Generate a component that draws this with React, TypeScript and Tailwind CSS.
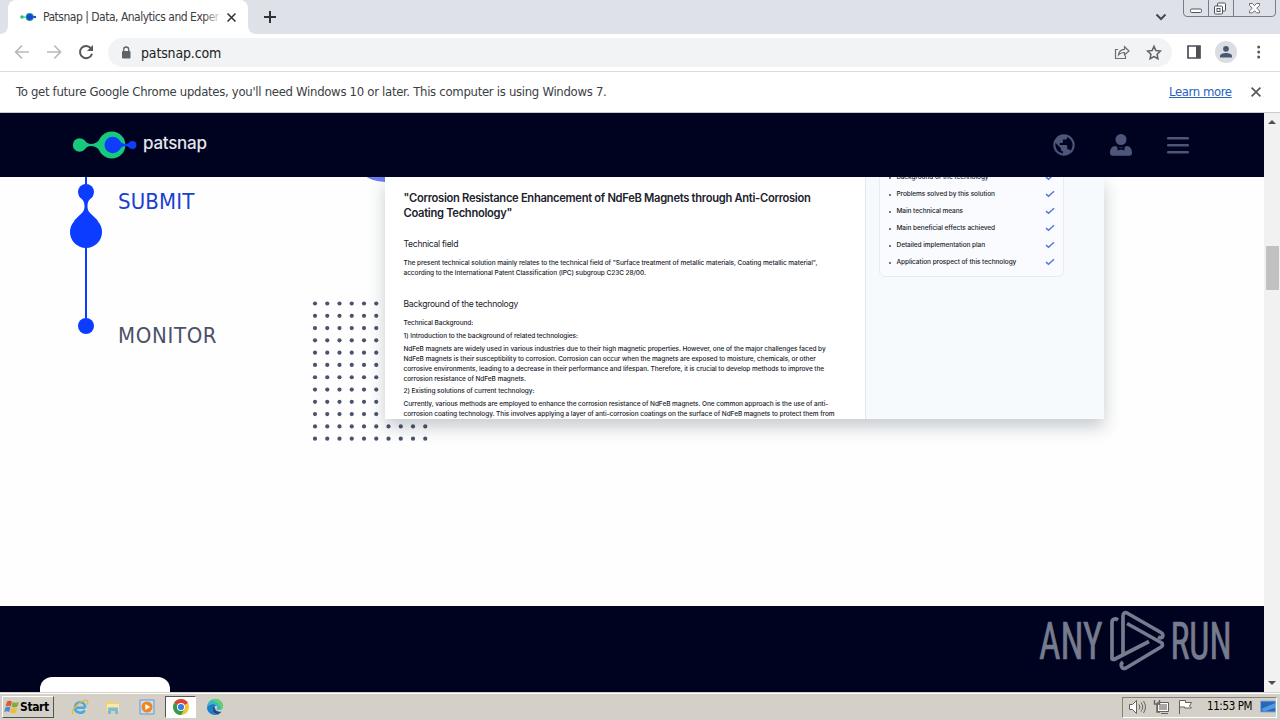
import { ReactNode } from "react";
import clsx from "clsx";

const outline = [
  "Background of the technology",
  "Problems solved by this solution",
  "Main technical means",
  "Main beneficial effects achieved",
  "Detailed implementation plan",
  "Application prospect of this technology",
];

const UI_FONT = "font-['DejaVu_Sans_Condensed','DejaVu_Sans',sans-serif] [font-stretch:condensed]";

function Line({ children, className }: { children: ReactNode; className?: string }) {
  return <div className={clsx("whitespace-nowrap", className)}>{children}</div>;
}

function CloseIcon({ className }: { className?: string }) {
  return (
    <svg viewBox="0 0 10 10" className={className} fill="none" stroke="currentColor" strokeWidth="1.700">
      <path d="M.6.6l8.800 8.800M9.400.6L.6 9.400" />
    </svg>
  );
}

function TabStrip() {
  return (
    <div className="flex h-[34px] shrink-0 bg-[#dee1e8]">
      <div className="w-2 bg-white">
        <div className="h-full rounded-br-lg bg-[#dee1e8]" />
      </div>
      <div className="flex w-[240px] items-center rounded-t-lg bg-white pl-3">
        <svg width="16" height="12" viewBox="0 0 16 12">
          <path d="M2 6h8" stroke="#1fc27a" strokeWidth="1" />
          <circle cx="2" cy="6" r="1.8" fill="#1fc27a" />
          <circle cx="9.7" cy="6" r="4" fill="#19a08c" />
          <circle cx="9.7" cy="6" r="3" fill="#1548d8" />
          <path d="M9 6h6" stroke="#1548d8" strokeWidth="1.4" />
          <circle cx="15" cy="6" r="1.2" fill="#1548d8" />
        </svg>
        <div className="relative ml-[7px] w-[177px] text-[12px] tracking-[-0.5px] text-[#3c4043]">
          <Line>Patsnap | Data, Analytics and Exper</Line>
          <div className="absolute inset-y-0 right-0 w-4 bg-linear-to-r from-white/0 to-white/90" />
        </div>
        <CloseIcon className="ml-[7px] size-[9px] text-[#303236]" />
      </div>
      <div className="w-2 bg-white">
        <div className="h-full rounded-bl-lg bg-[#dee1e8]" />
      </div>
      <svg width="12" height="12" viewBox="0 0 12 12" className="mt-[11px] ml-[8px] text-[#303236]">
        <path d="M6 0v12M0 6h12" stroke="currentColor" strokeWidth="2" />
      </svg>
      <div className="flex-1" />
      <svg width="12" height="8" viewBox="0 0 12 8" className="mt-[13px] mr-[16px]">
        <path d="M1.5 1.5L6 6l4.500-4.500" fill="none" stroke="#45484e" strokeWidth="2" />
      </svg>
      <svg width="93" height="18" viewBox="0 0 93 18" className="mr-[4px]" fill="none" stroke="#777c86">
        <path d="M.5 0v13q0 3.500 3.500 3.500h85q3.500 0 3.500-3.500V0M25.500 0v16.500M50.500 0v16.500" />
        <rect x="7.500" y="9" width="11" height="3.500" rx="1.200" fill="#fff" stroke="#50545e" />
        <rect x="34.500" y="3" width="8" height="8" rx="1" fill="#fff" stroke="#50545e" />
        <rect x="31.500" y="6" width="8" height="8" rx="1" fill="#fff" stroke="#50545e" />
        <rect x="34" y="8.500" width="3" height="3" stroke="#50545e" />
        <path
          d="M66.500 3.500h3l2 2.200 2-2.200h3v2l-2.800 2.700 2.800 2.700v2h-3l-2-2.200-2 2.200h-3v-2l2.800-2.700-2.800-2.700z"
          fill="#fff"
          stroke="#686c76"
        />
      </svg>
    </div>
  );
}

function Toolbar() {
  return (
    <div className="flex h-[38px] shrink-0 items-center border-b border-[#d9dce0] bg-white pl-[14px]">
      <svg width="82" height="18" viewBox="0 0 82 18" fill="none" strokeWidth="1.700" className="mb-[2px]">
        <path d="M15 9H2M8 2.500L1.700 9 8 15.500" stroke="#b7b9bc" />
        <path d="M33 9h13M40.300 2.500L46.600 9 40.300 15.500" stroke="#b7b9bc" />
        <path d="M77.200 5.700A6.100 6.100 0 1 0 78 10.700" stroke="#55585c" strokeWidth="2" />
        <path d="M79 2v6h-6z" fill="#55585c" />
      </svg>
      <div className="ml-[12px] flex h-[29px] w-[1064px] items-center rounded-full bg-[#f1f3f4] pl-[13px]">
        <svg width="10" height="13" viewBox="0 0 10 13" className="mb-px">
          <rect x="1" y="5" width="8.500" height="7.500" rx="1" fill="#5f6368" />
          <path d="M2.700 5V3.500a2.500 2.500 0 0 1 5 0V5" fill="none" stroke="#5f6368" strokeWidth="1.300" />
        </svg>
        <span className="ml-[10px] flex-1 pt-px text-[14px] tracking-[-0.15px] text-[#202124]">patsnap.com</span>
        <svg width="17" height="16" viewBox="0 0 17 16" className="mb-[2px]" fill="none" stroke="#6b6e72" strokeWidth="1.200">
          <path d="M4 5.500H1.500v9h10v-3M4.500 11c.3-3.500 2.300-5.500 6-5.700V2.700L15 7l-4.500 4V8.500c-3 0-4.700.8-6 2.500z" />
        </svg>
        <svg width="18" height="17" viewBox="0 0 18 17" className="mr-[9px] mb-px ml-[14px]">
          <path
            d="M9 2.400l1.900 4.100 4.500.6-3.300 3.100.8 4.500L9 12.500l-3.900 2.200.8-4.500-3.300-3.100 4.500-.6z"
            fill="none"
            stroke="#5f6368"
            strokeWidth="1.500"
          />
        </svg>
      </div>
      <svg width="14" height="14" viewBox="0 0 14 14" className="mb-[2px] ml-[15px]">
        <path d="M1 1h12v12H1z" fill="none" stroke="#4c4f54" strokeWidth="1.700" />
        <path d="M9 1h4v12H9z" fill="#4c4f54" />
      </svg>
      <svg width="22" height="22" viewBox="0 0 22 22" className="mb-px ml-[14px]">
        <circle cx="11" cy="11" r="11" fill="#dadde2" />
        <circle cx="11" cy="7.800" r="2.900" fill="#4b5672" />
        <path d="M5 16.500v-1c0-2.600 3-3.500 6-3.500s6 .9 6 3.500v1z" fill="#4b5672" />
      </svg>
      <svg width="4" height="14" viewBox="0 0 4 14" className="mb-px ml-[20px]" fill="#55585c">
        <circle cx="1.700" cy="2" r="1.500" />
        <circle cx="1.700" cy="7" r="1.500" />
        <circle cx="1.700" cy="12" r="1.500" />
      </svg>
    </div>
  );
}

function InfoBar() {
  return (
    <div className="flex h-[41px] shrink-0 items-center border-b border-[#c9ccd1] bg-white pl-4 text-[13px] text-[#3c4043]">
      <Line className="flex-1 tracking-[-0.3px]">
        To get future Google Chrome updates, you'll need Windows 10 or later. This computer is using Windows 7.
      </Line>
      <a className="w-[63px] whitespace-nowrap tracking-[-0.4px] text-[#2b62bd] underline">Learn more</a>
      <CloseIcon className="mr-[19px] ml-[19px] size-[10px] text-[#55585c]" />
    </div>
  );
}

function SiteNav() {
  return (
    <div className="relative z-20 flex h-16 items-center bg-[#000320] pl-[72px]">
      <svg width="66" height="30" viewBox="0 0 66 30">
        <g fill="#16c97c">
          <circle cx="7.500" cy="15" r="6.700" />
          <circle cx="39.800" cy="15" r="13.600" />
          <path d="M10 8.800c4 2 4 5 9 5.100 6 0 8-4 11.500-8.500v19.200C27 20 25 16.100 19 16.100c-5 .1-5 3.100-9 5.100z" />
        </g>
        <g fill="#0f3dff">
          <circle cx="40.700" cy="15" r="8.200" />
          <circle cx="60.500" cy="15" r="3.900" />
          <path d="M44 7.800c4 2 5 6 9.500 6.200 2.500 0 3.500-1.500 6-2.800v7.600c-2.500-1.300-3.500-2.800-6-2.800-4.500.2-5.500 4.200-9.500 6.200z" />
        </g>
      </svg>
      <span className="ml-[5px] pb-[4px] font-['Inter',sans-serif] text-[17px] leading-[24px] font-medium tracking-[-0.25px] text-[#e4e6ec]">
        patsnap
      </span>
      <div className="flex-1" />
      <svg width="24" height="24" viewBox="0 0 24 24" fill="#4d5678">
        <path d="M12 1.300a10.700 10.700 0 1 0 0 21.400 10.700 10.700 0 0 0 0-21.400zm-1.100 19.200A8.600 8.600 0 0 1 3.600 10l5.200 5.100v1.100c0 1.200 1 2.100 2.100 2.100zm7.400-2.700c-.3-.9-1.100-1.500-2-1.500h-1.100v-3.200c0-.6-.5-1.100-1.100-1.100H7.700V9.900h2.100c.6 0 1.100-.5 1.100-1.100V6.600h2.200c1.200 0 2.100-1 2.100-2.100v-.4a8.600 8.600 0 0 1 3.100 13.700z" />
      </svg>
      <svg width="24" height="24" viewBox="0 0 24 24" className="ml-[33px]" fill="#4d5678">
        <circle cx="12" cy="6.500" r="5.500" />
        <path d="M1 20c0-4.500 2-6.800 5.500-7 1.500 1 3 1.500 5.500 1.500s4-.5 5.500-1.500c3.500.2 5.500 2.500 5.500 7 0 2-1 2.700-2.700 2.700H3.700C2 22.700 1 22 1 20z" />
        <path d="M8.300 13.800L12 15.200l3.700-1.400-.3 3.800-3.400-1.200-3.400 1.200z" fill="#000320" />
      </svg>
      <svg width="22" height="18" viewBox="0 0 22 18" className="mr-[75px] ml-[34px]" fill="#4d5678">
        <rect y="1" width="22" height="2.500" rx="1" />
        <rect y="8" width="22" height="2.500" rx="1" />
        <rect y="15" width="22" height="2.500" rx="1" />
      </svg>
    </div>
  );
}

function Timeline() {
  return (
    <div className="flex w-[312px] shrink-0 pl-[69px]">
      <svg width="34" height="160" viewBox="0 0 34 160" fill="#0b3cff" className="shrink-0">
        <rect x="16" y="0" width="2" height="150" />
        <circle cx="17" cy="15" r="8" />
        <path d="M10 19c4 4 5.500 5 5.500 11 0 6-6 8-10.500 14h24c-4.500-6-10.500-8-10.500-14 0-6 1.500-7 5.500-11z" />
        <circle cx="17" cy="55" r="16" />
        <circle cx="17" cy="149" r="8" />
      </svg>
      <div className="ml-[15px] text-[22px] leading-[26px]">
        <Line className="mt-[12px] tracking-[0.15px] text-[#1a40cf]">SUBMIT</Line>
        <Line className="mt-[108px] tracking-[0.65px] text-[#4b5168]">MONITOR</Line>
      </div>
    </div>
  );
}

function Backdrop() {
  const dots = Array.from({ length: 120 }, (_, i) => ({
    x: 3 + (i % 10) * 12.25,
    y: 126.500 + Math.floor(i / 10) * 12.29,
  }));
  return (
    <svg width="120" height="270" viewBox="0 0 120 270" className="absolute top-0 left-0">
      <circle cx="73" cy="-31" r="36" fill="#6c7fee" />
      {dots.map((d) => (
        <circle key={`${d.x}-${d.y}`} cx={d.x} cy={d.y} r="2.100" fill="#4c526c" />
      ))}
    </svg>
  );
}

function PatentDoc() {
  return (
    <div className="relative flex h-[242px] w-[719px] bg-white font-['Inter',sans-serif] text-[#20222c] shadow-[0_8px_16px_rgba(20,40,60,0.24)]">
      <div className="w-[480px] pl-[18.500px] text-[6.500px] leading-[10px] font-medium tracking-[-0.06px]">
        <div className="mt-[14px] text-[11.200px] leading-[15px] font-semibold tracking-[-0.31px]">
          <Line>"Corrosion Resistance Enhancement of NdFeB Magnets through Anti-Corrosion</Line>
          <Line>Coating Technology"</Line>
        </div>
        <Line className="mt-[17px] text-[8.600px] leading-[12px] font-normal tracking-[-0.29px]">Technical field</Line>
        <div className="mt-[8px]">
          <Line>The present technical solution mainly relates to the technical field of "Surface treatment of metallic materials, Coating metallic material",</Line>
          <Line>according to the International Patent Classification (IPC) subgroup C23C 28/00.</Line>
        </div>
        <Line className="mt-[20px] text-[8.600px] leading-[12px] font-normal tracking-[-0.29px]">
          Background of the technology
        </Line>
        <Line className="mt-[8px]">Technical Background:</Line>
        <Line className="mt-[2.500px]">1) Introduction to the background of related technologies:</Line>
        <div className="mt-[3px]">
          <Line>NdFeB magnets are widely used in various industries due to their high magnetic properties. However, one of the major challenges faced by</Line>
          <Line>NdFeB magnets is their susceptibility to corrosion. Corrosion can occur when the magnets are exposed to moisture, chemicals, or other</Line>
          <Line>corrosive environments, leading to a decrease in their performance and lifespan. Therefore, it is crucial to develop methods to improve the</Line>
          <Line>corrosion resistance of NdFeB magnets.</Line>
        </div>
        <Line className="mt-[2.500px]">2) Existing solutions of current technology:</Line>
        <div className="mt-[2.500px]">
          <Line>Currently, various methods are employed to enhance the corrosion resistance of NdFeB magnets. One common approach is the use of anti-</Line>
          <Line>corrosion coating technology. This involves applying a layer of anti-corrosion coatings on the surface of NdFeB magnets to protect them from</Line>
        </div>
      </div>
      <div className="flex-1 border-l border-[#e3e7ed] bg-[#f6fafd]">
        <div className="mt-[-9px] ml-[13px] h-[109px] w-[185px] rounded-b-md border border-[#e7ecf1] bg-[#f9fbfe]">
          {outline.map((item) => (
            <div key={item} className="flex h-[17px] items-center pr-[8px] pl-[8.500px] text-[6.500px] font-medium tracking-[-0.06px]">
              <span className="size-[2px] rounded-full bg-[#4a4d57]" />
              <Line className="ml-[6px] flex-1">{item}</Line>
              <svg width="10" height="8" viewBox="0 0 10 8" className="mb-px">
                <path d="M1 4.200l2.500 2L9 1.300" fill="none" stroke="#5a78d8" strokeWidth="1.500" />
              </svg>
            </div>
          ))}
        </div>
      </div>
    </div>
  );
}

function Watermark() {
  return (
    <div className="flex h-[64px] items-center font-['Roboto',sans-serif] text-[#767b8e]">
      <svg width="192" height="64" viewBox="0 0 192 64" fill="none" stroke="currentColor" strokeWidth="3.700">
        <g fill="currentColor" strokeWidth="0.700" fontSize="52" fontWeight="400" transform="scale(0.6 1)">
          <text x="0" y="50" textLength="106" lengthAdjust="spacingAndGlyphs">
            ANY
          </text>
          <text x="219" y="50" textLength="102" lengthAdjust="spacingAndGlyphs">
            RUN
          </text>
        </g>
        <path
          d="M84 46V7c0-3 2-4 4-3l34 19.500c2 1.200 2.300 2.500 1.500 4.500-1 1.200-2.500 1-4.500 0"
          strokeLinejoin="round"
        />
        <path d="M79 11c-3-2-6-1-6 2.500V50q1 1 3 0l34-17.500" strokeLinejoin="round" />
        <path d="M84 53c-3 2-2 8 3 6l35-21c2-1.300 2-3.500 0-4.500L88 14.500" strokeLinejoin="round" />
      </svg>
    </div>
  );
}

function Scrollbar() {
  return (
    <div className="flex w-4 flex-col items-center bg-[#f1f1f1]">
      <svg width="8" height="4" viewBox="0 0 8 4" className="mt-[7px]">
        <path d="M0 4l4-4 4 4z" fill="#4f4f4f" />
      </svg>
      <div className="mt-[122px] h-[44px] w-[13px] bg-[#c1c1c1]" />
      <div className="flex-1" />
      <svg width="8" height="4" viewBox="0 0 8 4" className="mb-[7px]">
        <path d="M0 0l4 4 4-4z" fill="#4f4f4f" />
      </svg>
    </div>
  );
}

function Taskbar() {
  return (
    <div className="flex h-7 shrink-0 items-center border-t border-[#d4d0c8] bg-[#d4d0c8] pr-[3px] pl-[2px] shadow-[inset_0_1px_0_#fff]">
      <div className="mt-px flex h-[22px] w-[52px] items-center border border-t-white border-r-[#55534f] border-b-[#55534f] border-l-white pl-[1px]">
        <svg width="16" height="16" viewBox="0 0 16 16">
          <path d="M3 2.500c2-1.200 3.500-1 5 0L6.700 7.400C5 6.500 3.500 6.600 1.600 7.500z" fill="#e2572b" />
          <path d="M8.800 3c2 1 3.800 1 6-.2L13.500 7.500c-2 1.200-4 1.200-6 .2z" fill="#7fae3b" />
          <path d="M1.400 8.400c2-1 3.500-.9 5 0L5.200 13C3.700 12 2 12.100.2 13z" fill="#4a8bd0" />
          <path d="M7.300 8.800c2 1 3.900 1 6-.1L12 13.400c-2 1.100-4 1.100-6 .1z" fill="#efbd35" />
        </svg>
        <span className="text-[12px] font-bold tracking-[-0.4px] text-black">Start</span>
      </div>
      <div className="mt-px ml-[17px] flex items-center">
        <svg width="18" height="18" viewBox="0 0 18 18" fill="none">
          <path d="M14 9.700H5.500M14.200 9.700C14.200 2.500 4 2.500 4 9.700c0 5.500 7.500 6.500 9.700 2.600" stroke="#48a8df" strokeWidth="2.600" />
          <path d="M2 16c-3-3 8-15 14-13.500 1.300.5.800 2.500 0 4" stroke="#e8b935" strokeWidth="1.300" />
        </svg>
        <svg width="18" height="18" viewBox="0 0 18 18" className="ml-[15px]">
          <path d="M2 3h5l1 1.500h7V14H2z" fill="#eed078" />
          <path d="M3 6h12v7H3z" fill="#fae9a8" />
          <path d="M4 16V9.500h10V16h-3v-3H7v3z" fill="#7fbbd7" />
        </svg>
        <svg width="16" height="16" viewBox="0 0 16 16" className="ml-[17px]">
          <path d="M1 1h14v14H1z" fill="#c8def2" stroke="#6599cd" />
          <circle cx="8" cy="8" r="5.500" fill="#ef8520" />
          <path d="M6.300 5l5 3-5 3z" fill="#fff" />
        </svg>
        <div className="ml-[10px] flex h-[22px] w-[31px] items-center justify-center border border-t-[#55534f] border-r-white border-b-white border-l-[#55534f] bg-white">
          <svg width="16" height="16" viewBox="0 0 16 16">
            <circle cx="8" cy="8" r="8" fill="#f4c430" />
            <path d="M8 8L1.100 4A8 8 0 0 1 14.900 4z" fill="#dc4437" />
            <path d="M8 8L1.100 4A8 8 0 0 0 8 16l3.500-6z" fill="#329b50" />
            <circle cx="8" cy="8" r="4" fill="#fff" />
            <circle cx="8" cy="8" r="3.100" fill="#397fe2" />
          </svg>
        </div>
        <svg width="16" height="16" viewBox="0 0 16 16" className="ml-[11px]">
          <path d="M0 8.500C0 3 4 0 8 0c5 0 8 3.500 8 7 0 3-2 4-4 4-1.500 0-2.500-.5-2.500-1 .4-.5.700-1 .7-1.800C10 6 8 5 6 5 3 5 1 6.500 0 8.500z" fill="#38b9c0" />
          <path d="M8 0c5 0 8 3.500 8 7 0 2-1 3.300-2.500 3.800C14 6 10 2.500 4 1.200A8 8 0 0 1 8 0z" fill="#63d06a" />
          <path d="M0 8.500C1 6.500 3 5 6 5c2 0 3.500 1 4 2.300C7 6.500 5 8.500 5.500 11c.5 3 3 4.800 5.500 4.400-1 .4-2 .6-3 .6-5 0-8-4-8-7.500z" fill="#1b7cc8" />
          <path d="M5.500 11c-.4-2 .5-3.500 2-4 0 4 3 6.500 7 5.500-1 1.500-2.200 2.500-3.500 2.900C8 15.500 6 14 5.500 11z" fill="#174f91" />
        </svg>
      </div>
      <div className="flex-1" />
      <div className="mt-px flex h-[21px] items-center border border-t-[#85827c] border-r-white border-b-white border-l-[#85827c] pl-[6px]">
        <svg width="66" height="16" viewBox="0 0 66 16" fill="#fff" stroke="#65625e">
          <path d="M.5 5.500h3l4-4v13l-4-4h-3z" />
          <path d="M10 5.500q2 2.500 0 5M12 3.500q3.500 4.500 0 9M14.500 2q4 6 0 12" fill="none" />
          <path d="M28.500 3.500h11v9h-11zM32 14.500h7" />
          <path d="M30 5h8v6h-8z" fill="#a7a6a3" stroke="none" />
          <path d="M25.500 1v4h5V1M28 5v8h3" fill="none" strokeWidth="1.400" />
          <path d="M50.500 15V1.500h6v2h6l-2 3.500 2 2h-7V8h-5" />
        </svg>
        <span className="ml-[12px] w-[46px] whitespace-nowrap text-[11.500px] tracking-[-0.4px] text-black">11:53 PM</span>
        <svg width="16" height="14" viewBox="0 0 16 14" className="ml-[7px]">
          <path d="M.5 1h15v11H.5z" fill="#2867b5" stroke="#81aee0" />
          <path d="M1 9l14-6v5L4 11.500z" fill="#5199e2" />
        </svg>
      </div>
    </div>
  );
}

export default function App() {
  return (
    <div className={clsx("flex h-[720px] w-[1280px] flex-col overflow-hidden bg-white", UI_FONT)}>
      <TabStrip />
      <Toolbar />
      <InfoBar />
      <div className="flex h-[579px] shrink-0">
        <div className="w-[1264px]">
          <SiteNav />
          <div className="flex h-[429px] bg-[#fefefe]">
            <Timeline />
            <div className="relative pl-[73px]">
              <Backdrop />
              <PatentDoc />
            </div>
          </div>
          <div className="flex h-[86px] items-start justify-between bg-[#000320] pr-[33px] pl-10">
            <div className="mt-[71px] h-[15px] w-[130px] rounded-t-xl bg-white" />
            <div className="mt-[3px]">
              <Watermark />
            </div>
          </div>
        </div>
        <Scrollbar />
      </div>
      <Taskbar />
    </div>
  );
}
